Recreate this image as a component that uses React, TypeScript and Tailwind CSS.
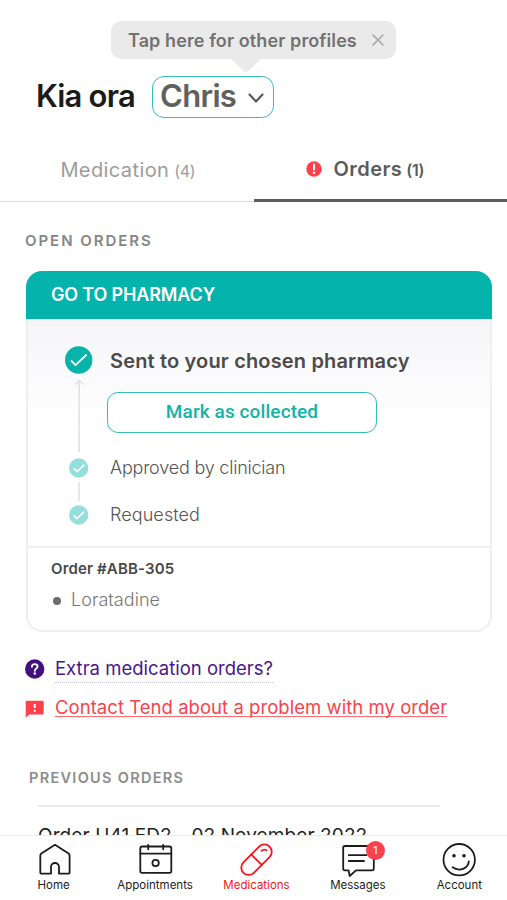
import type { ReactNode } from "react";
import { X } from "lucide-react";

interface StepDotProps {
  size: "lg" | "sm";
}

function StepDot({ size }: StepDotProps) {
  if (size === "lg") {
    return (
      <svg className="size-7 shrink-0" viewBox="0 0 28 28" fill="none">
        <circle cx="13.7" cy="14" r="13.7" fill="#08b3a9" />
        <path d="M6.5 14.8l4 4.4L21.2 9" stroke="#fff" strokeWidth="1.8" strokeLinecap="round" strokeLinejoin="round" />
      </svg>
    );
  }
  return (
    <svg className="size-5 shrink-0" viewBox="0 0 20 20" fill="none">
      <circle cx="9.7" cy="10" r="9.7" fill="#94dfda" />
      <path d="M5 10.6l3 3 6.8-6.4" stroke="#fff" strokeWidth="1.6" strokeLinecap="round" strokeLinejoin="round" />
    </svg>
  );
}

function AlertIcon() {
  return (
    <svg className="mt-px size-4" viewBox="0 0 16 16">
      <circle cx="8" cy="8" r="7.7" fill="#ff414d" />
      <path d="M8 3.6v5" stroke="#fff" strokeWidth="2" strokeLinecap="round" />
      <circle cx="8" cy="11.8" r="1.2" fill="#fff" />
    </svg>
  );
}

function QuestionIcon() {
  return (
    <svg className="size-5" viewBox="0 0 20 20" fill="none">
      <circle cx="9.7" cy="10" r="9.7" fill="#42107f" />
      <path d="M6.9 7.7c0-1.6 1.2-2.6 2.8-2.6s2.9 1 2.9 2.5c0 1.9-2.8 1.9-2.8 4.1" stroke="#fff" strokeWidth="1.9" strokeLinecap="round" />
      <circle cx="9.8" cy="14.6" r="1.25" fill="#fff" />
    </svg>
  );
}

function ReportIcon() {
  return (
    <svg className="size-5" viewBox="0 0 20 20" fill="none">
      <path d="M2 1.8h15.4c.8 0 1.3.5 1.3 1.3v11.1c0 .8-.5 1.3-1.3 1.3H4.2L.7 18.8V3.1c0-.8.5-1.3 1.3-1.3z" fill="#ff414d" />
      <path d="M9.7 5v4M9.7 10.7v2" stroke="#fff" strokeWidth="1.9" />
    </svg>
  );
}

interface NavItemProps {
  label: string;
  active?: boolean;
  badge?: number;
  children: ReactNode;
}

function NavItem({ label, active, badge, children }: NavItemProps) {
  return (
    <button className={active ? "flex flex-col items-center text-[#f5151c]" : "flex flex-col items-center text-[#1c1c1c]"}>
      <span className="relative">
        <svg className="size-9" viewBox="0 0 36 36" fill="none" stroke="currentColor" strokeWidth="1.8" strokeLinecap="round" strokeLinejoin="round">
          {children}
        </svg>
        {badge && (
          <span className="absolute -top-[2px] left-[26px] flex size-[19px] items-center justify-center rounded-full bg-[#ff414d] text-[10px] font-medium text-white">
            {badge}
          </span>
        )}
      </span>
      <span className="text-[11.5px] leading-[13px]">{label}</span>
    </button>
  );
}

export default function App() {
  return (
    <div className="flex h-[900px] w-[507px] flex-col overflow-hidden bg-white font-['Inter',sans-serif]">
      <main className="min-h-0 flex-1 overflow-hidden">
        <header>
          <div className="relative mt-[21px] ml-[111px] flex h-[38px] w-[285px] items-center justify-between rounded-[10px] bg-[#eaeaea] pr-[8px] pl-[17px] text-[#727272]">
            <span className="text-[18px] font-semibold tracking-[0.1px] whitespace-nowrap">Tap here for other profiles</span>
            <X className="size-5 text-[#a6a6a6]" strokeWidth={1.8} />
            <svg className="absolute top-[37px] left-[119px] h-[15px] w-8" viewBox="0 0 32 15">
              <path d="M0 0h32L18 13.2q-2 1.6-4 0z" fill="#eaeaea" />
            </svg>
          </div>

          <div className="mt-[17px] flex h-[42px] items-center pl-[36px]">
            <h1 className="w-[116px] pb-[3px] text-[31px] leading-none font-semibold tracking-[-0.8px] whitespace-nowrap text-[#1b1b1b]">Kia ora</h1>
            <button className="flex h-[42px] w-[122px] items-center justify-between rounded-[12px] border-[1.5px] border-[#35bdb5] pr-[9px] pl-[7px] text-[#606060]">
              <span className="pb-[3px] text-[31px] leading-none font-semibold tracking-[-0.68px]">Chris</span>
              <svg className="mt-[3px] h-[11px] w-4" viewBox="0 0 16 11" fill="none">
                <path d="M1.5 1.5L8 8.5l6.5-7" stroke="#555" strokeWidth="2.1" strokeLinecap="round" strokeLinejoin="round" />
              </svg>
            </button>
          </div>

          <div className="mt-[20px] grid h-[64px] grid-cols-2">
            <button className="flex items-center justify-center border-b border-[#dadada] pl-[2px] text-[20px] text-[#9c9c9c]">
              <span className="tracking-[0.4px]">Medication</span>
              <span className="ml-[5px] pt-[3px] text-[16px] tracking-[-0.4px]">(4)</span>
            </button>
            <button className="flex items-center border-b-[3px] border-[#5c5c5c] pl-[52px] text-[20px] font-semibold text-[#5b5b5b]">
              <AlertIcon />
              <span className="ml-[12px] tracking-[0.45px]">Orders</span>
              <span className="ml-[4px] pt-[3px] text-[16px] tracking-[-0.4px]">(1)</span>
            </button>
          </div>
        </header>

        <section className="pt-[30px] pr-[15px] pl-[25px]">
          <h2 className="text-[15px] leading-[18px] font-semibold tracking-[1.95px] text-[#868686]">OPEN ORDERS</h2>

          <article className="mt-[21px] ml-px flex h-[361px] flex-col">
            <h3 className="flex h-[48px] items-center rounded-t-[16px] bg-[#04b3ab] pl-[25px] text-[18px] font-semibold tracking-[-0.16px] text-white">
              <span className="pb-[2px]">GO TO PHARMACY</span>
            </h3>

            <div className="flex h-[229px] border-x-2 border-b-2 border-[#efefef] bg-linear-to-b from-[#f6f6f9] to-white to-50% pl-[37px]">
              <div className="flex w-7 flex-col items-center pt-[27px]">
                <StepDot size="lg" />
                <svg className="mt-[5px] h-[74px] w-[11px]" viewBox="0 0 11 74" fill="none" stroke="#e2e2e4" strokeWidth="1.6">
                  <path d="M5.2 1.5V73M.7 5.8l4.5-4.5 4.5 4.5" />
                </svg>
                <div className="mt-[5px]">
                  <StepDot size="sm" />
                </div>
                <div className="my-[4px] h-[19px] w-[1.5px] bg-[#e8e8e8]" />
                <StepDot size="sm" />
              </div>

              <div className="pl-[17px] text-[18px] font-light text-[#555]">
                <p className="mt-[28px] text-[20px] leading-7 font-semibold tracking-[0.16px] whitespace-nowrap text-[#4b4b4b]">Sent to your chosen pharmacy</p>
                <button className="mt-[17px] -ml-[3px] flex h-[41px] w-[270px] items-center justify-center rounded-[11px] border-[1.5px] border-[#35bdb5] bg-white font-['Roboto',sans-serif] text-[19px] font-medium tracking-[0.1px] text-[#12b3a8]">
                  Mark as collected
                </button>
                <p className="mt-[23px] leading-6 tracking-[-0.21px]">Approved by clinician</p>
                <p className="mt-[23px] leading-6 tracking-[0.08px]">Requested</p>
              </div>
            </div>

            <div className="flex-1 rounded-b-[16px] border-x-2 border-b-2 border-[#efefef] pt-[9px] pl-[23px]">
              <p className="text-[15px] leading-6 font-semibold tracking-[0.15px] text-[#484848]">Order #ABB-305</p>
              <p className="mt-[7px] flex items-center text-[18px] leading-6 font-light tracking-[0.04px] text-[#777]">
                <span className="mt-[2px] mr-[10px] ml-[2px] size-2 rounded-full bg-[#6c6c6c]" />
                Loratadine
              </p>
            </div>
          </article>

          <div className="mt-[22px] flex h-[30px] items-start">
            <div className="mt-[5px]">
              <QuestionIcon />
            </div>
            <a className="ml-[10px] block h-[29px] border-b-[1.5px] border-dotted border-[#c5bfd0] text-[18.5px] leading-[29px] whitespace-nowrap text-[#4b168a]">
              Extra medication orders?
            </a>
          </div>
          <div className="mt-[10px] flex items-start">
            <div className="mt-[5px]">
              <ReportIcon />
            </div>
            <a className="ml-[10px] block h-[23px] border-b-[1.5px] border-[#ff6970] text-[18.5px] leading-[27px] tracking-[0.04px] whitespace-nowrap text-[#f9434c]">
              Contact Tend about a problem with my order
            </a>
          </div>
        </section>

        <section className="pt-[50px] pl-[29px]">
          <h2 className="text-[14.5px] leading-[18px] font-semibold tracking-[1.3px] text-[#8c8c8c]">PREVIOUS ORDERS</h2>
          <div className="mt-[18px] ml-[9px] w-[402px] border-t-2 border-[#ebebeb] pt-[17px] text-[19px] leading-6 tracking-[0.1px] whitespace-nowrap text-[#222]">
            Order U41 ED2 - 02 November 2022
          </div>
        </section>
      </main>

      <nav className="z-10 h-[65px] shrink-0 border-t border-[#ececec] bg-white pt-[7px]">
        <div className="ml-[3px] grid w-[507px] grid-cols-5">
          <NavItem label="Home">
            <path d="M19 1.8l13.2 8.4q1.4.9 1.4 2.4v17.2q0 .9-.9.9H23v-6.7a4 4 0 0 0-8 0v6.7H5.2q-.9 0-.9-.9V12.6q0-1.5 1.4-2.4z" />
          </NavItem>
          <NavItem label="Appointments">
            <rect x="3.3" y="3.5" width="31" height="26.3" rx="1.8" />
            <path d="M3.3 10.7h31M11.2 1.9v4.4M26.2 1.9v4.4" />
            <circle cx="18.6" cy="20" r="3.2" />
          </NavItem>
          <NavItem label="Medications" active>
            <g transform="rotate(-45 18.5 16.7)">
              <rect x="0" y="9.3" width="37" height="14.8" rx="7.4" />
              <path d="M18.5 9.3v14.8" />
            </g>
            <path d="M23.6 7.8q2.4-2.2 4.8-.5" />
          </NavItem>
          <NavItem label="Messages" badge={1}>
            <path d="M5 3h27q1.8 0 1.8 1.8v20.7q0 1.8-1.8 1.8H16L9.7 33 8.6 27.3H5q-1.8 0-1.8-1.8V4.8Q3.2 3 5 3zM8.8 12.2h17.7M8.8 18H24" />
          </NavItem>
          <NavItem label="Account">
            <circle cx="18.2" cy="16.7" r="15.7" />
            <circle cx="13" cy="12.7" r="0.9" fill="currentColor" />
            <circle cx="23" cy="12.7" r="0.9" fill="currentColor" />
            <path d="M11.6 24.3c6.6 4.8 16 1.2 16.2-6" />
          </NavItem>
        </div>
      </nav>
    </div>
  );
}
